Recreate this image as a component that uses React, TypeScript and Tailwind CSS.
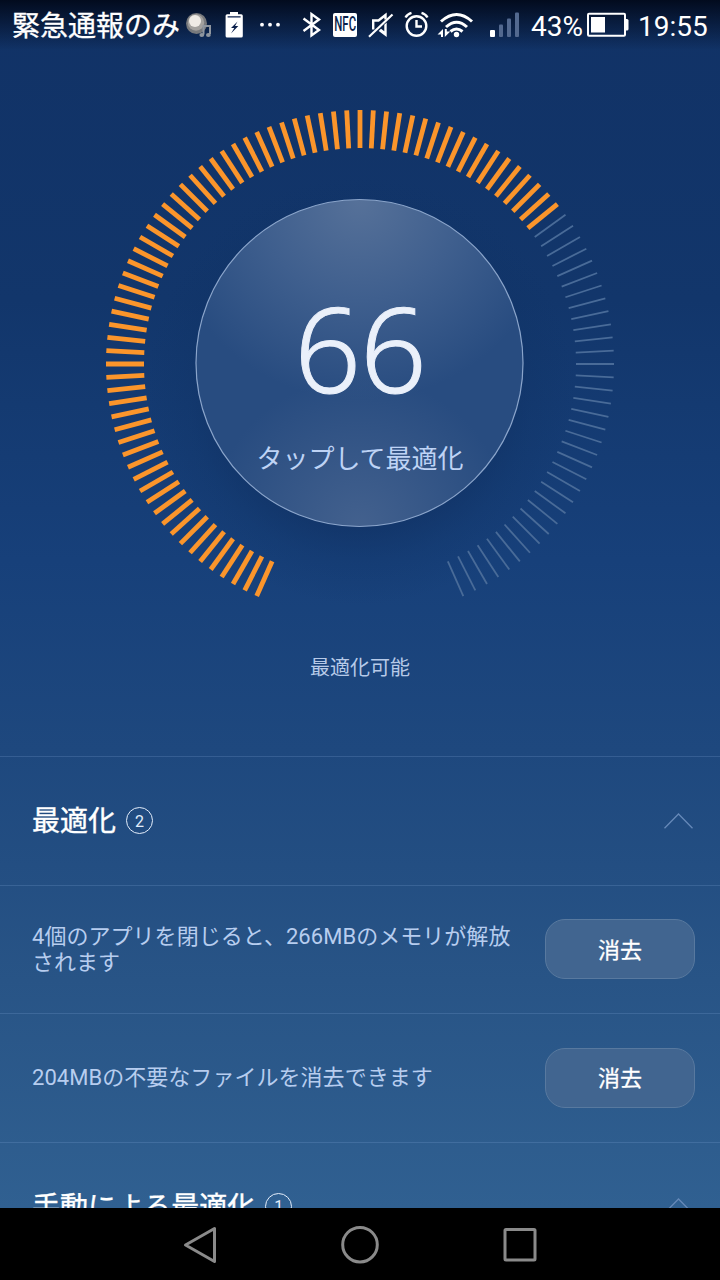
import React from "react";

const TICKS = Array.from({ length: 105 }, (_, i) => -156 + i * 3);

function StatusIcons() {
  return (
    <div className="flex h-[50px] items-start">
      {/* media notification */}
      <svg className="ml-[6px]" width="28" height="50" viewBox="186 0 28 50">
        <circle cx="196.5" cy="23.5" r="10.5" fill="#77797c" />
        <circle cx="196" cy="22.5" r="8.2" fill="#a3a19e" />
        <circle cx="195" cy="21" r="6" fill="#efebe5" />
        <path d="M203.500 34.500V26h6.500v8" fill="none" stroke="#8f969f" strokeWidth="2" />
        <ellipse cx="201.800" cy="35" rx="2.4" ry="1.9" fill="#8f969f" />
        <ellipse cx="208.4" cy="35" rx="2.4" ry="1.9" fill="#8f969f" />
      </svg>
      {/* battery saver */}
      <svg className="ml-[11px]" width="19" height="50" viewBox="225 0 19 50">
        <path fill="#fff" d="M230 12h8v2.200h3.200a1.600 1.600 0 0 1 1.600 1.600V36a1.600 1.600 0 0 1-1.600 1.600h-14A1.600 1.600 0 0 1 225.600 36V15.800a1.600 1.600 0 0 1 1.600-1.600H230z" />
        <path fill="#0a1f4c" d="M227.600 16.200h13v1.200h-13zM237.500 21.500l-6.500 6.500h3.300l-3.300 5.500 7.300-7.500h-3.300z" />
      </svg>
      <svg className="ml-[14px]" width="24" height="50" viewBox="258 0 24 50" fill="#fff">
        <circle cx="262" cy="24.700" r="1.900" />
        <circle cx="270" cy="24.700" r="1.900" />
        <circle cx="278" cy="24.700" r="1.900" />
      </svg>
      {/* bluetooth */}
      <svg className="ml-[20px]" width="20" height="50" viewBox="302 0 20 50" fill="none" stroke="#fff" strokeWidth="2.400">
        <path d="M303.500 18.500l15.500 11.500-7.500 5.500V14l7.500 5.500-15.500 11.500" />
      </svg>
      <span className="mt-[12.500px] ml-[10.500px] flex h-[24.500px] w-[24.500px] shrink-0 items-center justify-center rounded-[2px] bg-white">
        <span className="block scale-x-[0.6] scale-y-[1.05] font-['Roboto'] text-[19px] leading-none font-medium text-[#0a1f4c]">NFC</span>
      </span>
      {/* muted speaker */}
      <svg className="ml-[10px]" width="28" height="50" viewBox="367 0 28 50" fill="none" stroke="#fff" strokeWidth="2.400">
        <path d="M373.200 29.500v-9h5.300l7-5.500v4.500" />
        <path d="M386.700 22.500v14.500l-8-6 2.300-2.300 3.300 2.500v-6.400z" fill="#fff" stroke="none" />
        <path d="M369 36.800L392.500 14.500" strokeWidth="2.200" />
      </svg>
      {/* alarm */}
      <svg className="ml-[9px]" width="26" height="50" viewBox="404 0 26 50" fill="none" stroke="#fff" strokeWidth="2.400">
        <circle cx="416.500" cy="26" r="9.800" />
        <path d="M416.500 20v6.500h5.500M405.500 17.500q2-3.500 6-4.600M427.500 17.500q-2-3.500-6-4.600" />
      </svg>
      {/* wifi */}
      <svg className="ml-[7px]" width="38" height="50" viewBox="437 0 38 50" fill="none" stroke="#fff" strokeWidth="3">
        <path d="M441 21.500q15.700-14 31 0M446 27q10.700-9.500 21 0M450.500 31.500q6-5 12 0" />
        <circle cx="456.500" cy="34.500" r="2.700" fill="#fff" stroke="none" />
        <path d="M443 29v8h-2v-2.500h-3.500zM444.800 37v-8h2v2.500h3.500z" fill="#fff" stroke="none" />
      </svg>
      {/* signal */}
      <svg className="ml-[14px]" width="32" height="50" viewBox="489 0 32 50">
        <rect x="490" y="30" width="5" height="7" rx="1" fill="#fff" />
        <g fill="#53698f">
          <rect x="499" y="24.500" width="4" height="12.500" rx="1" />
          <rect x="507" y="18.500" width="4" height="18.500" rx="1" />
          <rect x="515" y="12.500" width="4" height="24.500" rx="1" />
        </g>
      </svg>
    </div>
  );
}

function StatusBar() {
  return (
    <header className="flex h-[50px] w-full shrink-0 items-start overflow-hidden bg-linear-to-b from-[#020b1e] to-transparent pl-[12px] whitespace-nowrap text-white">
      <span className="w-[168px] text-[28px] leading-[53px] [-webkit-text-stroke:0.3px_white]">緊急通報のみ</span>
      <StatusIcons />
      <span className="ml-[10px] w-[56px] font-['Roboto'] text-[28px] leading-[53px]">43%</span>
      <svg width="42" height="50" viewBox="587 0 42 50">
        <rect x="588" y="13.700" width="37" height="22" rx="1" fill="none" stroke="#fff" strokeWidth="2" />
        <rect x="591" y="17" width="14" height="15.500" fill="#fff" />
        <path d="M626 19h1a1.500 1.500 0 0 1 1.500 1.500v8.500a1.500 1.500 0 0 1-1.500 1.500h-1z" fill="#fff" />
      </svg>
      <span className="ml-[9px] font-['Roboto'] text-[28px] leading-[53px]">19:55</span>
    </header>
  );
}

function Gauge() {
  return (
    <section className="flex h-[706px] shrink-0 flex-col items-center">
      <div className="mt-[54px] grid h-[520px] w-[520px] place-items-center">
        <svg className="col-start-1 row-start-1" width="520" height="520" viewBox="100 104 520 520">
          <defs>
            <radialGradient id="shade" gradientUnits="userSpaceOnUse" cx="360" cy="390" r="215">
              <stop offset="0.640" stopColor="#0f2f60" stopOpacity="0.550" />
              <stop offset="0.800" stopColor="#0f3264" stopOpacity="0.250" />
              <stop offset="1" stopColor="#0f3264" stopOpacity="0" />
            </radialGradient>
            <radialGradient id="glow" gradientUnits="userSpaceOnUse" cx="360" cy="200" r="200">
              <stop offset="0" stopColor="#567199" />
              <stop offset="0.500" stopColor="#3f5f8e" />
              <stop offset="1" stopColor="#284c80" />
            </radialGradient>
            <radialGradient id="glowLow" gradientUnits="userSpaceOnUse" cx="360" cy="527" r="150">
              <stop offset="0" stopColor="#43618e" />
              <stop offset="1" stopColor="#43618e" stopOpacity="0" />
            </radialGradient>
          </defs>
          <circle cx="360" cy="390" r="215" fill="url(#shade)" />
          {TICKS.map((a) => (
            <line
              key={a}
              x1="360"
              x2="360"
              y1="110"
              y2="148"
              stroke={a <= 51 ? "#fb952b" : "#496b98"}
              strokeWidth={a <= 51 ? 4.8 : 1.8}
              transform={`rotate(${a} 360 364)`}
            />
          ))}
          <circle cx="359.500" cy="363" r="163.500" fill="url(#glow)" />
          <circle cx="359.500" cy="363" r="163.500" fill="url(#glowLow)" stroke="#8ba5cb" strokeWidth="1.200" />
        </svg>
        <div className="z-10 col-start-1 row-start-1 flex flex-col items-center">
          <span className="mt-[35px] font-['Noto_Sans'] text-[117px] leading-[122px] font-light tracking-[-1px] text-[#eaf0fa] [-webkit-text-stroke:1px_#eaf0fa]">66</span>
          <span className="mt-[32px] text-[26px] leading-[36px] text-[#bed3f5]">タップして最適化</span>
        </div>
      </div>
      <p className="mt-[26px] text-[20px] leading-[36px] text-[#b7cae8]">最適化可能</p>
    </section>
  );
}

function SectionHeader({ title, count }: { title: string; count: number }) {
  return (
    <div className="flex h-[128.500px] shrink-0 items-center border-t border-[#8fb4e8]/20 pr-[27px] pl-[32px]">
      <h2 className="pt-[3px] text-[28px] leading-[40px] text-white [-webkit-text-stroke:0.4px_white]">{title}</h2>
      <span className="ml-[10px] flex h-[27px] w-[27px] items-center justify-center rounded-full border-[1.500px] border-[#e3edfb] pt-[2px] font-['Roboto'] text-[16px] leading-none text-[#e3edfb]">
        {count}
      </span>
      <svg className="ml-auto" width="29" height="16" viewBox="0 0 29 16" fill="none" stroke="#6689b8" strokeWidth="1.300">
        <path d="M.5 15.200L14.500 1l14 14.200" />
      </svg>
    </div>
  );
}

function ActionRow({ text }: { text: string }) {
  return (
    <div className="flex h-[128.500px] shrink-0 items-center justify-between border-t border-[#8fb4e8]/20 pr-[25px] pl-[32px]">
      <p className="w-[486px] pt-[1px] text-[22px] leading-[26px] tracking-[0.04px] text-[#b7cdef]">{text}</p>
      <button className="h-[60px] w-[150px] rounded-[20px] border border-[#58799f] bg-[#416590] pt-[2px] text-[22px] text-white [-webkit-text-stroke:0.3px_white]">消去</button>
    </div>
  );
}

export default function App() {
  return (
    <div className="flex h-[1280px] w-[720px] flex-col overflow-hidden bg-black font-['Roboto','Noto_Sans_CJK_JP',sans-serif]">
      <main className="flex h-[1208px] shrink-0 flex-col overflow-hidden bg-[linear-gradient(180deg,#113266_0px,#12366b_300px,#17407a_560px,#1e487e_750px,#285486_980px,#306091_1208px)]">
        <StatusBar />
        <Gauge />
        <SectionHeader title="最適化" count={2} />
        <ActionRow text="4個のアプリを閉じると、266MBのメモリが解放されます" />
        <ActionRow text="204MBの不要なファイルを消去できます" />
        <SectionHeader title="手動による最適化" count={1} />
      </main>
      <nav className="flex h-[72px] shrink-0 items-center justify-center gap-[120px]">
        <svg width="40" height="40" viewBox="0 0 40 40" fill="none" stroke="#8a8a8a" strokeWidth="3" strokeLinejoin="round">
          <path d="M5.500 21L34.500 4.500v33z" />
        </svg>
        <svg width="40" height="40" viewBox="0 0 40 40" fill="none" stroke="#8a8a8a" strokeWidth="3">
          <circle cx="20" cy="20.700" r="17.300" />
        </svg>
        <svg width="40" height="40" viewBox="0 0 40 40" fill="none" stroke="#8a8a8a" strokeWidth="3" strokeLinejoin="round">
          <rect x="5" y="5.500" width="30" height="30.500" rx="1" />
        </svg>
      </nav>
    </div>
  );
}
